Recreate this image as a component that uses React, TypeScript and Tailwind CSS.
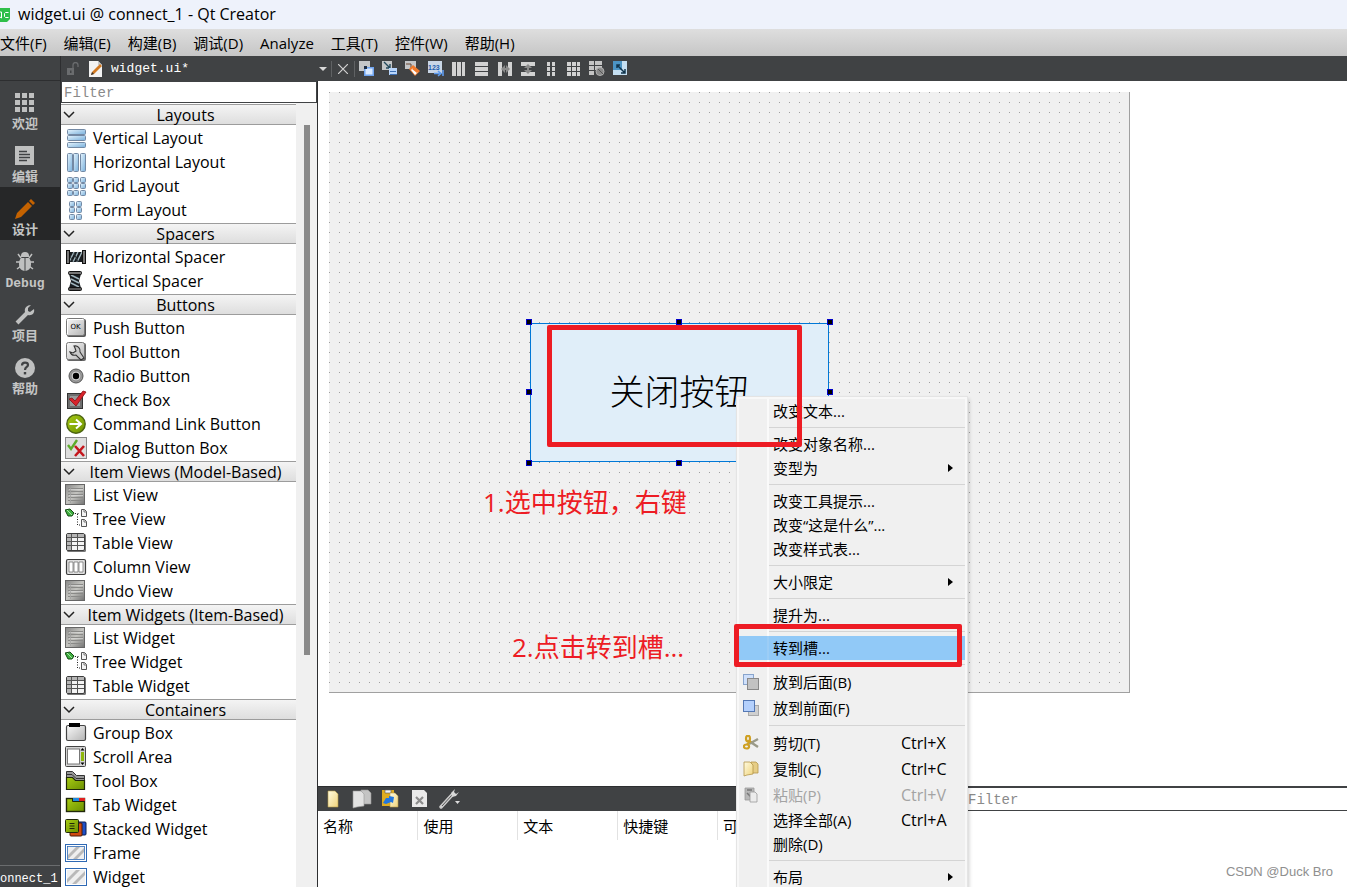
import type { ReactNode } from "react";

type Entry = { label: string; icon: ReactNode };
type Group = { title: string; items: Entry[] };
type MenuRow = {
  label: string;
  keys?: string;
  submenu?: boolean;
  icon?: ReactNode;
  disabled?: boolean;
  active?: boolean;
};

function Glyph({ size = 22, children }: { size?: number; children: ReactNode }) {
  return (
    <svg width={size} height={size} viewBox={`0 0 ${size} ${size}`} className="shrink-0" aria-hidden="true">
      {children}
    </svg>
  );
}

// gradients shared by all the icons below
function Gradients() {
  return (
    <svg width="0" height="0" className="absolute" aria-hidden="true">
      <defs>
        <linearGradient id="blue" x1="0" y1="0" x2="1" y2="1">
          <stop offset="0" stopColor="#e6f4fd" />
          <stop offset="1" stopColor="#78b0dc" />
        </linearGradient>
        <linearGradient id="steel" x1="0" y1="0" x2="1" y2="1">
          <stop offset="0" stopColor="#fafafa" />
          <stop offset="1" stopColor="#b4b4b4" />
        </linearGradient>
        <linearGradient id="list" x1="0" y1="0" x2="1" y2="1">
          <stop offset="0" stopColor="#868686" />
          <stop offset="0.5" stopColor="#c4c4c0" />
          <stop offset="1" stopColor="#727272" />
        </linearGradient>
        <linearGradient id="lime" x1="0" y1="0" x2="1" y2="1">
          <stop offset="0" stopColor="#a9cc14" />
          <stop offset="1" stopColor="#6b8f00" />
        </linearGradient>
        <linearGradient id="paper" x1="0" y1="0" x2="1" y2="1">
          <stop offset="0" stopColor="#fffbe0" />
          <stop offset="1" stopColor="#efd37c" />
        </linearGradient>
      </defs>
    </svg>
  );
}

const cells = (xs: number[], ys: number[], w: number, h: number) =>
  xs.flatMap((x) =>
    ys.map((y) => (
      <rect key={`${x}-${y}`} x={x} y={y} width={w} height={h} rx="1" fill="url(#blue)" stroke="#7389a4" />
    ))
  );

const verticalLayout = <Glyph>{cells([2.5], [2.5, 8.5, 15.5], 18, 5)}</Glyph>;
const horizontalLayout = <Glyph>{cells([2.5, 8.5, 15.5], [2.5], 5, 18)}</Glyph>;
const gridLayout = <Glyph>{cells([2.5, 8.5, 15.5], [2.5, 8.5, 15.5], 5, 5)}</Glyph>;
const formLayout = <Glyph>{cells([4.5, 11.5], [2.5, 8.5, 15.5], 5, 5)}</Glyph>;

const horizontalSpacer = (
  <Glyph>
    <path d="M4 6h14v10H4z" fill="#181c20" />
    <path d="M4 16l5-10M8 16l5-10M12 16l5-10" stroke="#9fb4bc" strokeWidth="1.4" />
    <path d="M4 8l4 8M9 7l4 9" stroke="#30383c" strokeWidth="1" />
    <rect x="1.5" y="4.5" width="3" height="13" fill="#777" stroke="#111" />
    <rect x="17.5" y="4.5" width="3" height="13" fill="#777" stroke="#111" />
  </Glyph>
);
const verticalSpacer = (
  <Glyph>
    <path d="M4 4h12l-2 7 2 7H4l2-7z" fill="#181c20" />
    <path d="M6 5l8 4M6 9l8 4M6 13l8 4" stroke="#9fb4bc" strokeWidth="1.4" />
    <rect x="3.5" y="1.5" width="13" height="3" rx="1" fill="#777" stroke="#111" />
    <rect x="3.5" y="17.5" width="13" height="3" rx="1" fill="#555" stroke="#111" />
  </Glyph>
);
const pushButton = (
  <Glyph>
    <rect x="2" y="2" width="19" height="18" rx="2" fill="#555" />
    <rect x="1.5" y="1.5" width="18" height="17" rx="2" fill="url(#steel)" stroke="#777" />
    <path d="M2.5 17.5v-15h16" stroke="#fff" fill="none" />
    <text x="10.5" y="12" textAnchor="middle" fontSize="7" fontFamily="DejaVu Sans" fill="#000">OK</text>
  </Glyph>
);
const toolButton = (
  <Glyph>
    <rect x="2" y="2" width="19" height="18" rx="2" fill="#666" />
    <rect x="1.5" y="1.5" width="18" height="17" rx="2" fill="url(#steel)" stroke="#777" />
    <path d="M9 5a5 5 0 0 1 6 6l4 6-3 2-5-5a5 5 0 0 1-6-3l3 1 3-2-1-3z" fill="#c9c9c9" stroke="#333" strokeWidth="1.1" />
  </Glyph>
);
const radioButton = (
  <Glyph>
    <circle cx="11" cy="11" r="7" fill="#9a9a9a" stroke="#555" />
    <circle cx="11" cy="11" r="5" fill="#d4d4d4" stroke="#888" />
    <circle cx="11" cy="11" r="3.2" fill="#000" />
  </Glyph>
);
const checkBox = (
  <Glyph>
    <rect x="2.5" y="4.5" width="15" height="15" fill="#6e6e6e" stroke="#333" />
    <rect x="5" y="7" width="10" height="10" fill="#9a9a9a" />
    <path d="M4 10l3-1 3 3 8-10 3 1-10 14z" fill="#d8242c" stroke="#8d0f14" strokeWidth="0.8" />
  </Glyph>
);
const commandLink = (
  <Glyph>
    <circle cx="11" cy="11" r="9.2" fill="url(#lime)" stroke="#4c6410" strokeWidth="1.4" />
    <path d="M4.5 11h11M11 6.5l5 4.5-5 4.5" stroke="#fff" strokeWidth="2" fill="none" />
  </Glyph>
);
const dialogButtons = (
  <Glyph>
    <rect x="0.5" y="0.5" width="21" height="21" fill="#dedede" stroke="#888" />
    <path d="M3 8l3 4 6-9" stroke="#5dab2a" strokeWidth="2.4" fill="none" />
    <path d="M10 9l9 10M19 9l-9 10" stroke="#c4161c" strokeWidth="2.6" />
  </Glyph>
);
const listIcon = (
  <Glyph>
    <rect x="0.5" y="0.5" width="19" height="20" fill="url(#list)" stroke="#666" />
    <path
      d="M3 4.5h2M3 7.5h2M3 10.5h2M3 13.5h2M3 16.5h2M6 4.5h12M6 7.5h12M6 10.5h12M6 13.5h12M6 16.5h12"
      stroke="#8a8a88"
    />
    <path d="M4 5.5h14M4 11.5h14" stroke="#ddd" strokeWidth="0.6" />
    <path d="M5.5 2v17" stroke="#999" strokeWidth="0.6" />
  </Glyph>
);
const treeIcon = (
  <Glyph>
    <path d="M0 2l5-1 4 4-2 3-4 0z" fill="#3fae3f" stroke="#124a12" />
    <path d="M2 2l5 5" stroke="#a6e6a6" />
    <path d="M10 5.5h5M12.5 6v11h3" stroke="#222" strokeDasharray="1 1.5" fill="none" />
    <path d="M16.5 1.5h3l2 2v5h-5zM16.5 11.5h3l2 2v5h-5z" fill="#f4f4f4" stroke="#555" />
    <path d="M19 1.5v2.5h2.5M19 11.5v2.5h2.5" stroke="#777" fill="none" />
  </Glyph>
);
const tableIcon = (
  <Glyph>
    <rect x="2" y="2" width="19" height="18" rx="1.5" fill="#777" />
    <rect x="1.5" y="1.5" width="18" height="17" rx="1.5" fill="#f4f4f4" stroke="#3c3c3c" />
    <path d="M2 2h4v16H2z" fill="#b5b5b5" />
    <path d="M2 2h17v3H2z" fill="#b5b5b5" />
    <path d="M2 5.5h17M2 9.5h17M2 13.5h17M6.5 2v16M12.5 2v16" stroke="#555" />
  </Glyph>
);
const columnIcon = (
  <Glyph>
    <rect x="1.5" y="3.5" width="19" height="15" rx="1.5" fill="#dedede" stroke="#3c3c3c" strokeWidth="1.2" />
    <path d="M4 6h4v10H4zM9 6h4v10H9zM14 6h4v10h-4z" fill="#fff" stroke="#777" strokeWidth="0.8" />
  </Glyph>
);
const groupBox = (
  <Glyph>
    <rect x="1.5" y="3.5" width="19" height="15" rx="1.5" fill="url(#steel)" stroke="#444" strokeWidth="1.2" />
    <path d="M4 1h11v4H4z" fill="#000" />
  </Glyph>
);
const scrollArea = (
  <Glyph>
    <rect x="0.5" y="0.5" width="20" height="20" rx="1" fill="#d4d4d4" stroke="#444" />
    <rect x="2.5" y="3" width="12" height="15" fill="#fff" stroke="#777" />
    <path d="M16 6h3v9h-3z" fill="#8fb70c" />
    <path d="M17.5 2l2 2.500h-4zM17.500 19l2-2.500h-4z" fill="#000" />
  </Glyph>
);
const toolBox = (
  <Glyph>
    <path d="M1.500 1.500h6l4 4h8v5h-18z" fill="#999" stroke="#333" />
    <path d="M2 4.500h5l4 4h8" stroke="#333" fill="none" />
    <path d="M1.500 7.500h6l3 3h9v9h-18z" fill="url(#lime)" stroke="#20280a" strokeWidth="1.200" />
  </Glyph>
);
const tabWidget = (
  <Glyph>
    <rect x="1.500" y="4.500" width="18" height="13" fill="url(#lime)" stroke="#20280a" strokeWidth="1.400" />
    <path d="M8 4h6v3H8z" fill="#1f8be0" />
    <path d="M14 4h6v3h-6z" fill="#e02020" />
    <path d="M7.500 4v3.500h12" stroke="#20280a" fill="none" />
  </Glyph>
);
const stackedWidget = (
  <Glyph>
    <rect x="9" y="4" width="12" height="13" rx="1" fill="#1f50c8" stroke="#0a1c50" />
    <rect x="5" y="5" width="12" height="13" rx="1" fill="#d04a10" stroke="#501a06" />
    <rect x="0.500" y="1.500" width="13" height="13" rx="1" fill="url(#lime)" stroke="#20280a" />
    <path d="M4.500 5.500h5M4.500 8h5M4.500 10.500h5" stroke="#20280a" />
  </Glyph>
);
const frameIcon = (
  <Glyph>
    <rect x="0.500" y="2.500" width="21" height="17" fill="#fff" stroke="#2f69b4" />
    <rect x="2.500" y="4.500" width="17" height="13" fill="#efefef" stroke="#2f69b4" strokeWidth="0.800" />
    <path d="M3 13l8-8h4L3 17zM8 17L19 6v4l-7 7z" fill="#b9b9b9" />
  </Glyph>
);
const widgetIcon = (
  <Glyph>
    <rect x="0.500" y="2.500" width="21" height="17" fill="#fff" stroke="#2f69b4" />
    <path d="M2 4h18v14H2z" fill="#efefef" />
    <path d="M2 13l9-9h4L2 17zM7 18L20 5v4l-9 9z" fill="#b9b9b9" />
  </Glyph>
);

const groups: Group[] = [
  {
    title: "Layouts",
    items: [
      { label: "Vertical Layout", icon: verticalLayout },
      { label: "Horizontal Layout", icon: horizontalLayout },
      { label: "Grid Layout", icon: gridLayout },
      { label: "Form Layout", icon: formLayout },
    ],
  },
  {
    title: "Spacers",
    items: [
      { label: "Horizontal Spacer", icon: horizontalSpacer },
      { label: "Vertical Spacer", icon: verticalSpacer },
    ],
  },
  {
    title: "Buttons",
    items: [
      { label: "Push Button", icon: pushButton },
      { label: "Tool Button", icon: toolButton },
      { label: "Radio Button", icon: radioButton },
      { label: "Check Box", icon: checkBox },
      { label: "Command Link Button", icon: commandLink },
      { label: "Dialog Button Box", icon: dialogButtons },
    ],
  },
  {
    title: "Item Views (Model-Based)",
    items: [
      { label: "List View", icon: listIcon },
      { label: "Tree View", icon: treeIcon },
      { label: "Table View", icon: tableIcon },
      { label: "Column View", icon: columnIcon },
      { label: "Undo View", icon: listIcon },
    ],
  },
  {
    title: "Item Widgets (Item-Based)",
    items: [
      { label: "List Widget", icon: listIcon },
      { label: "Tree Widget", icon: treeIcon },
      { label: "Table Widget", icon: tableIcon },
    ],
  },
  {
    title: "Containers",
    items: [
      { label: "Group Box", icon: groupBox },
      { label: "Scroll Area", icon: scrollArea },
      { label: "Tool Box", icon: toolBox },
      { label: "Tab Widget", icon: tabWidget },
      { label: "Stacked Widget", icon: stackedWidget },
      { label: "Frame", icon: frameIcon },
      { label: "Widget", icon: widgetIcon },
    ],
  },
];

const modes: Entry[] = [
  {
    label: "欢迎",
    icon: (
      <Glyph size={20}>
        <path d="M0 0h5v5H0zM7 0h5v5H7zM14 0h5v5h-5zM0 7h5v5H0zM7 7h5v5H7zM14 7h5v5h-5zM0 14h5v5H0zM7 14h5v5H7zM14 14h5v5h-5z" fill="#bfc0c0" />
      </Glyph>
    ),
  },
  {
    label: "编辑",
    icon: (
      <Glyph size={20}>
        <path d="M0 0h19v19H0z" fill="#bfc0c0" />
        <path d="M4 5.500h8M4 8.500h11M4 11.500h11M4 14.500h8" stroke="#404244" strokeWidth="1.300" />
      </Glyph>
    ),
  },
  {
    label: "设计",
    icon: (
      <Glyph size={20}>
        <path d="M0 20l2-6L13 3l4 4L6 18zM14 2l2-2 4 4-2 2z" fill="#c46200" />
      </Glyph>
    ),
  },
  {
    label: "Debug",
    icon: (
      <Glyph size={20}>
        <path d="M3 2l3 4M17 2l-3 4M1 10h4M19 10h-4M2 17l4-3M18 17l-4-3" stroke="#bfc0c0" strokeWidth="1.500" />
        <path d="M6 4a4 4 0 0 1 8 0v1H6z" fill="#bfc0c0" />
        <path d="M9.500 6v13C5 18 4 15 4 12c0-3 1-5 2-6zM10.500 6v13c4.500-1 5.500-4 5.500-7 0-3-1-5-2-6z" fill="#bfc0c0" />
      </Glyph>
    ),
  },
  {
    label: "项目",
    icon: (
      <Glyph size={20}>
        <path d="M2 18L13 7" stroke="#bfc0c0" strokeWidth="4" />
        <path d="M16 0l-3 3v3l2 1 4-3c1 4-2 7-6 6l-3-3C9 3 12 0 16 0z" fill="#bfc0c0" />
      </Glyph>
    ),
  },
  {
    label: "帮助",
    icon: (
      <Glyph size={20}>
        <circle cx="10" cy="10" r="10" fill="#bfc0c0" />
        <path d="M7 7.500c0-4 6-3.500 6-.5 0 2-3 2-3 5" stroke="#404244" strokeWidth="2.200" fill="none" />
        <path d="M8.800 14h2.400v2.400H8.800z" fill="#404244" />
      </Glyph>
    ),
  },
];

const menus = ["文件(F)", "编辑(E)", "构建(B)", "调试(D)", "Analyze", "工具(T)", "控件(W)", "帮助(H)"];

const tools: Entry[] = [
  {
    label: "Edit widgets",
    icon: (
      <Glyph size={16}>
        <path d="M0 0h11v10H0z" fill="#c4c6c8" />
        <path d="M5 6h10v9H5z" fill="#6fa4f0" />
        <path d="M6.500 7.500h7v6h-7z" fill="#d9e9ff" />
        <path d="M5 5h3v3H5z" fill="#1c2c44" />
      </Glyph>
    ),
  },
  {
    label: "Edit signals and slots",
    icon: (
      <Glyph size={16}>
        <path d="M0 0h10v9H0z" fill="#c4c6c8" />
        <path d="M2 1l6 6M8 3v4H4" stroke="#234a5c" strokeWidth="1.400" fill="none" />
        <path d="M7 7h8v7H7z" fill="#b9d6fc" />
        <path d="M8 10.500h6M8 13.500h7" stroke="#3c6fb4" />
      </Glyph>
    ),
  },
  {
    label: "Edit buddies",
    icon: (
      <Glyph size={16}>
        <path d="M0 0h11v8H0z" fill="#c4c6c8" />
        <path d="M1 3h5v6" stroke="#6b4630" fill="none" />
        <path d="M4 8l4-4 7 6-5 5z" fill="#f07a2c" />
        <path d="M8 7l5 4-3 3-4-5z" fill="#fff" />
        <path d="M9 6l5 4-2 2-5-4z" fill="#f07a2c" />
      </Glyph>
    ),
  },
  {
    label: "Edit tab order",
    icon: (
      <Glyph size={16}>
        <path d="M0 0h14v12H0z" fill="#c9d6e6" />
        <text x="0" y="9" fontSize="7" fontFamily="Liberation Sans" fontWeight="bold" fill="#1d5fb0">123</text>
        <path d="M6 12.500h6M10 10l3 2.500-3 2.500M15 9v6" stroke="#5f9df0" strokeWidth="1.600" fill="none" />
      </Glyph>
    ),
  },
  {
    label: "Lay out horizontally",
    icon: <Glyph size={16}><path d="M1 1h4v14H1zM6 1h4v14H6zM11 1h3v14h-3z" fill="#d2d2d2" /></Glyph>,
  },
  {
    label: "Lay out vertically",
    icon: <Glyph size={16}><path d="M1 1h13v4H1zM1 6h13v4H1zM1 11h13v4H1z" fill="#d2d2d2" /></Glyph>,
  },
  {
    label: "Horizontal splitter",
    icon: (
      <Glyph size={16}>
        <path d="M1 1h4v14H1zM11 1h4v14h-4z" fill="#d2d2d2" />
        <path d="M4 8l4-4v3h1V4l4 4-4 4V9H8v3z" fill="#8a8a8a" />
      </Glyph>
    ),
  },
  {
    label: "Vertical splitter",
    icon: (
      <Glyph size={16}>
        <path d="M1 1h14v4H1zM1 11h14v4H1z" fill="#d2d2d2" />
        <path d="M8 3l4 4H9v2h3l-4 4-4-4h3V7H4z" fill="#8a8a8a" />
      </Glyph>
    ),
  },
  {
    label: "Form layout",
    icon: <Glyph size={16}><path d="M4 1h3v4H4zM9 1h3v4H9zM4 6h3v4H4zM9 6h3v4H9zM4 11h3v4H4zM9 11h3v4H9z" fill="#d2d2d2" /></Glyph>,
  },
  {
    label: "Grid layout",
    icon: <Glyph size={16}><path d="M1 1h4v4H1zM6 1h4v4H6zM11 1h3v4h-3zM1 6h4v4H1zM6 6h4v4H6zM11 6h3v4h-3zM1 11h4v4H1zM6 11h4v4H6zM11 11h3v4h-3z" fill="#d2d2d2" /></Glyph>,
  },
  {
    label: "Break layout",
    icon: (
      <Glyph size={16}>
        <path d="M0 0h5v4H0zM6 0h7v4H6zM0 5h5v4H0zM6 5h7v4H6zM0 10h5v4H0z" fill="#c4c4c4" />
        <circle cx="11" cy="10.500" r="4" fill="#8a8a8a" stroke="#b0b0b0" />
        <path d="M9 8l5 5" stroke="#555" />
      </Glyph>
    ),
  },
  {
    label: "Adjust size",
    icon: (
      <Glyph size={16}>
        <path d="M1 0h14v14H1z" fill="#c5dff2" />
        <path d="M1 0h9v9H1z" fill="#4c94c4" />
        <path d="M5 4l8 8M13 8v4H9M5 7V4h3" stroke="#10344c" strokeWidth="1.500" fill="none" />
      </Glyph>
    ),
  },
];

const actionTools: Entry[] = [
  {
    label: "New action",
    icon: <Glyph size={20}><path d="M5 2h7l3 3v13H5z" fill="url(#paper)" stroke="#b69a48" strokeWidth="0.600" /></Glyph>,
  },
  {
    label: "Copy action",
    icon: (
      <Glyph size={20}>
        <path d="M9 1h7l3 3v11H9z" fill="#c4c4c4" stroke="#999" strokeWidth="0.600" />
        <path d="M1 2h8l3 3v12l-7 1-4 1z" fill="#e2e2e2" stroke="#999" strokeWidth="0.600" />
      </Glyph>
    ),
  },
  {
    label: "Paste action",
    icon: (
      <Glyph size={20}>
        <path d="M1 1h12v16H1z" fill="#e0ac20" />
        <path d="M4 1h6v3H4z" fill="#f4f4f4" stroke="#555" strokeWidth="0.600" />
        <path d="M9 4h5l3 3v11H9z" fill="url(#paper)" stroke="#b69a48" strokeWidth="0.600" />
        <path d="M2 14l3-5h3V7l5 1-1 6-2-1-5 2z" fill="#2277e0" />
      </Glyph>
    ),
  },
  {
    label: "Delete action",
    icon: (
      <Glyph size={20}>
        <path d="M2 1h12l3 3v14H2z" fill="#eaeaea" />
        <path d="M6 8l7 7M13 8l-7 7" stroke="#8c8c8c" strokeWidth="2.200" />
      </Glyph>
    ),
  },
  {
    label: "Configure",
    icon: (
      <Glyph size={22}>
        <path d="M2 19L13 7" stroke="#cdcdcd" strokeWidth="3.400" strokeLinecap="round" />
        <path d="M3 18L13 7" stroke="#555" strokeWidth="1" />
        <path d="M16 1l-4 4 1 4 4-1 3-4-3 2-2-2z" fill="#d8d8d8" />
        <path d="M16 13h5l-2.500 3z" fill="#ddd" />
      </Glyph>
    ),
  },
];

const sendBack = (
  <Glyph size={16}>
    <rect x="0.500" y="0.500" width="10" height="10" fill="#cfe0fb" stroke="#88a4cc" />
    <rect x="4.500" y="4.500" width="11" height="11" fill="#c2c2c2" stroke="#888" />
  </Glyph>
);
const bringFront = (
  <Glyph size={16}>
    <rect x="5.500" y="5.500" width="10" height="10" fill="#d0d0d0" stroke="#aaa" />
    <rect x="0.500" y="0.500" width="11" height="11" fill="#b4d0fc" stroke="#5478b4" />
  </Glyph>
);
const cutIcon = (
  <Glyph size={16}>
    <path d="M15 4L6 9M15 12L6 6" stroke="#9a9a88" strokeWidth="2.400" />
    <ellipse cx="5" cy="3.500" rx="2" ry="2.800" fill="none" stroke="#cfa022" strokeWidth="2.200" />
    <ellipse cx="3.500" cy="11.500" rx="2.600" ry="2" fill="none" stroke="#cfa022" strokeWidth="2.200" />
    <path d="M4 9l4-3" stroke="#cfa022" strokeWidth="2" />
  </Glyph>
);
const copyIcon = (
  <Glyph size={16}>
    <path d="M8 1h5l2 2v9H8z" fill="#e6cd86" stroke="#b4964a" strokeWidth="0.800" />
    <path d="M1 1h6l3 3v9l-6 1-3 1z" fill="url(#paper)" stroke="#b4964a" strokeWidth="0.800" />
  </Glyph>
);
const pasteIcon = (
  <Glyph size={16}>
    <path d="M2 1h9v12H2z" fill="#b8b8b8" stroke="#999" strokeWidth="0.800" />
    <path d="M4 3h5M4 6l4 4" stroke="#777" strokeWidth="1.500" />
    <path d="M7 5h5l2 2v8H7z" fill="#ececec" stroke="#999" strokeWidth="0.800" />
  </Glyph>
);

// a separator is drawn between two sections
const contextMenu: MenuRow[][] = [
  [{ label: "改变文本..." }],
  [{ label: "改变对象名称..." }, { label: "变型为", submenu: true }],
  [{ label: "改变工具提示..." }, { label: "改变“这是什么”..." }, { label: "改变样式表..." }],
  [{ label: "大小限定", submenu: true }],
  [{ label: "提升为..." }],
  [{ label: "转到槽...", active: true }],
  [
    { label: "放到后面(B)", icon: sendBack },
    { label: "放到前面(F)", icon: bringFront },
  ],
  [
    { label: "剪切(T)", keys: "Ctrl+X", icon: cutIcon },
    { label: "复制(C)", keys: "Ctrl+C", icon: copyIcon },
    { label: "粘贴(P)", keys: "Ctrl+V", icon: pasteIcon, disabled: true },
    { label: "选择全部(A)", keys: "Ctrl+A" },
    { label: "删除(D)" },
  ],
  [{ label: "布局", submenu: true }],
];

function TitleBar() {
  return (
    <header className="flex h-[29px] shrink-0 items-center gap-2 bg-[#eef2fb] text-black">
      <svg width="10" height="14" viewBox="0 0 10 14" aria-hidden="true">
        <path d="M0 0h10v11l-3 3H0z" fill="#2fbf4a" />
        <path d="M0 4h1.500v6M1.500 10L0 9M8.500 4.500H5.500l-1 1v3l1 1h3" stroke="#fff" fill="none" />
      </svg>
      <h1 className="pb-px text-base leading-5">widget.ui @ connect_1 - Qt Creator</h1>
    </header>
  );
}

function MenuBar() {
  return (
    <nav className="flex h-[27px] shrink-0 items-center gap-[17px] bg-linear-to-b from-[#dedede] to-[#c6c6c6]">
      {menus.map((name) => (
        <button key={name} className="whitespace-nowrap text-[15px] leading-5 text-black">
          {name}
        </button>
      ))}
    </nav>
  );
}

function ModeBar() {
  return (
    <aside className="flex w-[61px] shrink-0 flex-col border-r border-[#2d2e30] bg-[#404244]">
      <div className="h-[25px] shrink-0 border-b border-[#2d2e30]" />
      {modes.map((mode) => (
        <button
          key={mode.label}
          className={`flex h-[53px] shrink-0 flex-col items-center gap-1 pt-3 pr-[10px] text-[13px] leading-4 font-bold text-[#c4c5c5] ${
            mode.label === "设计" ? "bg-[#262728]" : ""
          }`}
        >
          {mode.icon}
          <span className="font-['Liberation_Mono','Noto_Sans_CJK_SC',monospace]">{mode.label}</span>
        </button>
      ))}
      <div className="mt-auto flex h-[22px] shrink-0 items-center border-t border-[#6a6c6e] pt-1 font-['Liberation_Mono',monospace] text-[12px] text-white">
        onnect_1
      </div>
    </aside>
  );
}

function DocumentBar() {
  return (
    <div className="flex h-[25px] shrink-0 items-center bg-[#404244]">
      <svg width="14" height="14" viewBox="0 0 14 14" className="ml-[5px] shrink-0" aria-hidden="true">
        <path d="M1 6h7v7H1z" fill="#6a6c6e" />
        <path d="M7 6V3a2.500 2.500 0 0 1 5 0v2" stroke="#6a6c6e" strokeWidth="1.300" fill="none" />
        <path d="M4 8.500h1.500V11H4z" fill="#404244" />
      </svg>
      <svg width="16" height="18" viewBox="0 0 16 18" className="ml-2 shrink-0" aria-hidden="true">
        <path d="M1 1h9l4 4v12H1z" fill="#f2f2f2" />
        <path d="M10 1v4h4" fill="#c8c8c8" />
        <path d="M3 15l1-3 8-8 2 2-8 8z" fill="#d07820" />
        <path d="M3 15l1-3 2 2z" fill="#333" />
      </svg>
      <div className="relative ml-[7px] w-[220px] shrink-0">
        <select
          aria-label="Open document"
          className="block h-6 w-full appearance-none bg-transparent pt-px font-['Liberation_Mono',monospace] text-[13px] text-white"
        >
          <option>widget.ui*</option>
        </select>
        <svg width="8" height="4" viewBox="0 0 8 4" className="pointer-events-none absolute top-[10px] right-1" aria-hidden="true">
          <path d="M0 0h8L4 4z" fill="#d8d8d8" />
        </svg>
      </div>
      <button aria-label="Close document" className="flex h-4 w-6 shrink-0 items-center justify-center border-x border-[#606264]">
        <svg width="10" height="10" viewBox="0 0 10 10" aria-hidden="true">
          <path d="M0 0l10 10M10 0L0 10" stroke="#d2d2d2" strokeWidth="1.200" />
        </svg>
      </button>
      <div className="flex items-center">
        {tools.map((tool) => (
          <button key={tool.label} aria-label={tool.label} className="flex w-[23px] justify-center">
            {tool.icon}
          </button>
        ))}
      </div>
    </div>
  );
}

function WidgetBox() {
  return (
    <section className="flex w-[257px] shrink-0 flex-col border-r border-[#2d2e30] bg-[#f0f0f0]">
      <input
        aria-label="Filter widgets"
        placeholder="Filter"
        className="h-[22px] w-full shrink-0 border border-[#404244] bg-white px-[2px] pt-px font-['Liberation_Mono',monospace] text-[14px] placeholder:text-[#8a8a8a]"
      />
      <div className="flex min-h-0 flex-1">
        <div className="w-[235px] shrink-0 overflow-hidden bg-white">
          {groups.map((group) => (
            <div key={group.title}>
              <button className="mt-px mb-px flex h-[21px] w-full items-center justify-center border-y border-[#9c9c9c] bg-linear-to-b from-[#f4f4f4] to-[#dedede] text-base leading-5 text-black">
                <svg width="12" height="8" viewBox="0 0 12 8" className="ml-[2px] shrink-0" aria-hidden="true">
                  <path d="M1 1l5 5 5-5" stroke="#222" strokeWidth="1.500" fill="none" />
                </svg>
                <span className="flex-1 whitespace-nowrap">{group.title}</span>
              </button>
              <ul>
                {group.items.map((item) => (
                  <li key={item.label} className="flex h-6 items-center gap-[6px] pl-1 text-base leading-6 text-black">
                    {item.icon}
                    {item.label}
                  </li>
                ))}
              </ul>
            </div>
          ))}
        </div>
        <div className="flex flex-1 justify-center pt-[22px]">
          <div className="h-[530px] w-[6px] bg-[#8a8a8a]" />
        </div>
      </div>
    </section>
  );
}

function ContextMenu() {
  return (
    <div
      role="menu"
      className="absolute top-[305px] left-[408px] z-10 w-[230px] border-2 border-[#f8f8f8] bg-[#f0f0f0] text-[15px] leading-5 text-black shadow-[2px_2px_4px_rgba(0,0,0,0.2)] outline outline-[#e4e4e4]"
    >
      {contextMenu.map((section, index) => (
        <div key={section[0].label}>
          {index > 0 && (
            <div className="ml-7 flex h-[9px] items-center border-l-2 border-[#fafafa]">
              <hr className="w-full border-[#d4d4d4]" />
            </div>
          )}
          {section.map((row) => (
            <button
              key={row.label}
              role="menuitem"
              disabled={row.disabled}
              className={`flex w-full items-center text-left ${row.icon ? "h-[26px]" : "h-6"} ${
                row.active ? "bg-[#91c9f7]" : ""
              } ${row.disabled ? "text-[#a3a3a3]" : ""}`}
            >
              <span
                className={`flex h-full w-[30px] shrink-0 items-center border-r-2 pl-1 ${
                  row.active ? "border-[#9ccdf6]" : "border-[#fafafa]"
                }`}
              >
                {row.icon}
              </span>
              <span className="flex-1 pl-1 whitespace-nowrap">{row.label}</span>
              {row.keys && <span className="w-16 text-base leading-5">{row.keys}</span>}
              {row.submenu && (
                <svg width="5" height="8" viewBox="0 0 5 8" className="mr-3" aria-hidden="true">
                  <path d="M0 0v8l5-4z" fill="#000" />
                </svg>
              )}
            </button>
          ))}
        </div>
      ))}
    </div>
  );
}

const handles = [
  "-top-1 -left-1",
  "-top-1 left-[146px]",
  "-top-1 -right-1",
  "top-[66px] -left-1",
  "top-[66px] -right-1",
  "-bottom-1 -left-1",
  "-bottom-1 left-[146px]",
  "-bottom-1 -right-1",
];

function FormCanvas() {
  return (
    <main className="min-h-0 flex-1 bg-white pt-[11px] pl-[11px]">
      {/* the form is a free canvas: what lies on it has its own coordinates */}
      <div className="relative h-[601px] w-[801px] border-r border-b border-[#a0a0a0] bg-[#f0f0f0] bg-[linear-gradient(to_right,#f0f0f0_9px,transparent_9px),linear-gradient(#a0a0a0_1px,transparent_1px)] bg-[size:10px_10px] bg-[position:1px_0,0_0]">
        <div className="absolute top-[231px] left-[201px] h-[139px] w-[299px]">
          <button className="h-full w-full border border-[#0078d7] bg-[#e0eef9] pb-1 font-['Noto_Sans_CJK_SC',sans-serif] text-[35px] font-light text-black">
            关闭按钮
          </button>
          {handles.map((place) => (
            <span key={place} className={`absolute h-[6px] w-[6px] border border-[#0000c8] bg-black ${place}`} />
          ))}
        </div>
        <p className="absolute top-[392px] left-[154px] text-[26px] leading-9 whitespace-nowrap text-[#ed1c24]">1.选中按钮，右键</p>
        <p className="absolute top-[537px] left-[183px] text-[26px] leading-9 whitespace-nowrap text-[#ed1c24]">2.点击转到槽...</p>
        <ContextMenu />
        <div className="pointer-events-none absolute top-[233px] left-[218px] z-20 h-[122px] w-[255px] rounded-[2px] border-5 border-[#ed1c24]" />
        <div className="pointer-events-none absolute top-[532px] left-[405px] z-20 h-[43px] w-[228px] rounded-[2px] border-5 border-[#ed1c24]" />
      </div>
    </main>
  );
}

function BottomPanels() {
  return (
    <div className="flex h-[101px] shrink-0 bg-white">
      <section className="min-w-0 flex-1 overflow-hidden">
        <div className="flex h-[25px] items-center gap-[9px] border-t border-[#2d2e30] bg-[#404244] pl-[5px]">
          {actionTools.map((tool) => (
            <button key={tool.label} aria-label={tool.label}>
              {tool.icon}
            </button>
          ))}
        </div>
        <table className="w-[500px] table-fixed text-left text-[15px] leading-5 text-black">
          <thead>
            <tr className="h-[29px]">
              {["名称", "使用", "文本", "快捷键", "可"].map((name) => (
                <th key={name} className="border-r border-[#e2e2e2] pl-[5px] font-normal">
                  {name}
                </th>
              ))}
            </tr>
          </thead>
        </table>
      </section>
      <section className="w-[381px] shrink-0">
        <input
          aria-label="Filter signals"
          placeholder="Filter"
          className="block h-[25px] w-full border-t-2 border-b border-[#404244] bg-white px-[2px] pt-px font-['Liberation_Mono',monospace] text-[14px] placeholder:text-[#8a8a8a]"
        />
      </section>
    </div>
  );
}

export default function App() {
  return (
    <div className="relative flex h-screen flex-col overflow-hidden bg-white font-['Open_Sans','Noto_Sans_CJK_SC',sans-serif]">
      <Gradients />
      <TitleBar />
      <MenuBar />
      <div className="flex min-h-0 flex-1">
        <ModeBar />
        <div className="flex min-w-0 flex-1 flex-col">
          <DocumentBar />
          <div className="flex min-h-0 flex-1">
            <WidgetBox />
            <div className="flex min-w-0 flex-1 flex-col">
              <FormCanvas />
              <BottomPanels />
            </div>
          </div>
        </div>
      </div>
      <span className="absolute right-[14px] bottom-[5px] font-['Liberation_Sans',sans-serif] text-[13px] leading-5 text-[#8f8f8f]">
        CSDN @Duck Bro
      </span>
    </div>
  );
}
